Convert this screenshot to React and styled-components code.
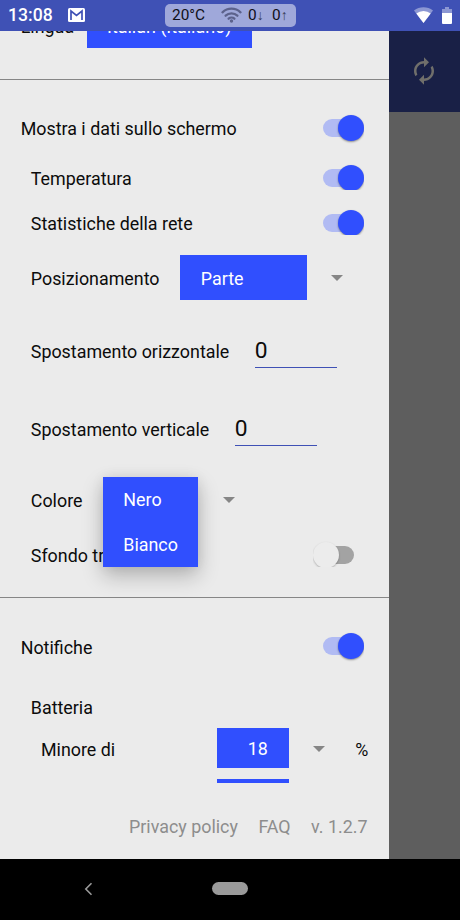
import React, { useState } from "react";
import styled, { createGlobalStyle, css } from "styled-components";
import { MdAutorenew } from "react-icons/md";

const colors = {
  indigo: "#3f51b5",
  indigoDim: "#192046",
  accent: "#304ffe",
  track: "#b1bbf3",
  trackOff: "#a3a3a3",
  surface: "#ebebeb",
  scrim: "#5e5e5e",
  text: "#0c0c0c",
  muted: "#8d8d8d",
  divider: "#868686"
};

const GlobalStyle = createGlobalStyle`
  * {
    box-sizing: border-box;
  }
  body {
    margin: 0;
    background: #000;
    color: ${colors.text};
    font-family: Roboto, "Liberation Sans", sans-serif;
    font-size: 17.88px;
    line-height: 21px;
  }
`;

const StyledScreen = styled.div`
  width: 460px;
  height: 920px;
  display: flex;
  flex-direction: column;
  overflow: hidden;
`;

const StyledStatusBar = styled.header`
  height: 30.5px;
  flex-shrink: 0;
  display: flex;
  align-items: center;
  padding: 0 8px;
  background: ${colors.indigo};
  color: #fff;
`;
const StyledClock = styled.span`
  width: 60px;
  padding-top: 1px;
  font-size: 17.6px;
  font-weight: 500;
`;
const StyledChip = styled.div`
  width: 131px;
  height: 23px;
  margin-left: 79.5px;
  padding-left: 7.5px;
  display: flex;
  align-items: center;
  border-radius: 5px;
  background: #9fa8da;
  color: #101018;
  font-size: 15.4px;
  white-space: nowrap;

  svg {
    margin: 0 6px 0 16px;
    flex-shrink: 0;
  }
`;
const StyledTemperature = styled.span`
  padding-top: 1px;
`;
const StyledTraffic = styled.span`
  display: flex;
  align-items: center;
  width: 24px;
  flex-shrink: 0;

  small {
    font-family: "Liberation Sans", sans-serif;
    font-size: 14px;
    color: #3a3d55;
    margin-top: 1px;
  }
`;
const StyledSystemIcons = styled.div`
  margin-left: auto;
  display: flex;
  gap: 9px;
`;

const StyledBody = styled.div`
  height: 828px;
  display: flex;
`;
const StyledDrawer = styled.main`
  width: 388.5px;
  height: 100%;
  overflow: hidden;
  background: ${colors.surface};
`;
const StyledBackdrop = styled.aside`
  flex: 1;
  background: ${colors.scrim};
`;
const StyledToolbar = styled.div`
  height: 81.5px;
  display: flex;
  align-items: center;
  justify-content: center;
  background: ${colors.indigoDim};
  color: #706f6b;
`;

const StyledRow = styled.div`
  height: 45px;
  margin-top: ${props => props.$top || 0}px;
  padding: 0 24.5px 0 ${props => props.$indent || 30.8}px;
  display: flex;
  align-items: center;
  white-space: nowrap;
`;
const StyledLabel = styled.span`
  padding-top: 1px;
`;
const StyledUnit = styled(StyledLabel)`
  margin-left: 30px;
`;
const StyledDivider = styled.hr`
  height: 1px;
  margin: ${props => props.$top}px 0 0;
  border: none;
  background: ${colors.divider};
`;
const StyledSelect = styled.div`
  width: ${props => props.$width}px;
  height: ${props => props.$height || 45}px;
  margin-left: ${props => props.$gap || 0}px;
  padding: 1px 0 0 ${props => props.$inset || 20.5}px;
  flex-shrink: 0;
  display: flex;
  align-items: center;
  background: ${colors.accent};
  color: #fff;
`;
const StyledCaret = styled.span`
  margin-left: 24.5px;
  border: 6px solid transparent;
  border-top-color: #868686;
  border-bottom: none;
`;
const StyledInput = styled.input`
  width: 82px;
  height: 35px;
  margin: 0 0 2px ${props => props.$gap}px;
  padding: 0;
  border: none;
  border-bottom: 1px solid ${colors.indigo};
  outline: none;
  background: none;
  color: ${colors.text};
  font: 22.8px Roboto, sans-serif;
`;

const StyledSwitch = styled.button`
  width: 41px;
  height: ${props => (props.$clipped ? 26 : 32)}px;
  margin: ${props => (props.$clipped ? "-3px" : "3px")} ${props =>
  props.$on ? 0 : 10.5}px 0 auto;
  padding: 1px 0 0;
  border: none;
  background: none;
  flex-shrink: 0;
  display: flex;
  overflow: hidden;
`;
const StyledTrack = styled.span`
  width: 41px;
  height: 18px;
  margin-top: 4px;
  display: flex;
  align-items: center;
  border-radius: 9px;
  background: linear-gradient(
    to right,
    ${props =>
      props.$on
        ? css`${colors.track}, ${colors.track}`
        : css`transparent 14px, ${colors.trackOff} 14px`}
  );
`;
const StyledThumb = styled.span`
  width: 26px;
  height: 26px;
  flex-shrink: 0;
  margin-left: ${props => (props.$on ? 15 : 0)}px;
  border-radius: 50%;
  background: ${props => (props.$on ? colors.accent : "#ececec")};
  box-shadow: 0 1px 2px rgba(0, 0, 0, ${props => (props.$on ? 0.4 : 0.25)});
`;

const StyledMenuAnchor = styled.div`
  position: relative;
  width: 95.5px;
  height: 45px;
  margin-left: 20.3px;
`;
const StyledMenu = styled.ul`
  position: absolute;
  top: 0;
  left: 0;
  z-index: 2;
  width: 100%;
  margin: 0;
  padding: 0;
  list-style: none;
  background: ${colors.accent};
  color: #fff;
  box-shadow: 0 9px 20px rgba(0, 0, 0, 0.24), 0 0 12px rgba(0, 0, 0, 0.07);
`;
const StyledMenuItem = styled.li`
  height: 44.75px;
  padding: 1px 0 0 20.5px;
  display: flex;
  align-items: center;
`;

const StyledNumberPicker = styled.div`
  height: 54.5px;
  width: 71.5px;
  margin: 14px 0 0 102px;
  flex-shrink: 0;
  overflow: hidden;
  border-bottom: 4.5px solid ${colors.accent};
`;
const StyledFooter = styled.footer`
  margin-top: 45px;
  padding-right: 21px;
  display: flex;
  justify-content: flex-end;
  gap: 20.5px;
  color: ${colors.muted};
`;

const StyledNavBar = styled.nav`
  flex: 1;
  display: flex;
  align-items: center;
  padding: 0 0 1px 83px;
  background: #000;
`;
const StyledHomePill = styled.span`
  width: 36px;
  height: 13px;
  margin-left: 119px;
  border-radius: 7px;
  background: #9a9a9a;
`;

const Switch = ({ defaultOn = true, clipped }) => {
  const [on, setOn] = useState(defaultOn);
  return (
    <StyledSwitch $on={on} $clipped={clipped} onClick={() => setOn(!on)}>
      <StyledTrack $on={on}>
        <StyledThumb $on={on} />
      </StyledTrack>
    </StyledSwitch>
  );
};

const MailIcon = () => (
  <svg width="17" height="14" viewBox="0 0 17 14">
    <rect width="17" height="14" rx="1.5" fill="#fff" />
    <path
      d="M3 12V3l5.5 4.5L14 3v9"
      fill="none"
      stroke={colors.indigo}
      strokeWidth="1.7"
    />
  </svg>
);
const WifiIcon = () => (
  <svg width="21" height="16" viewBox="0 0 21 16">
    <g fill="none" stroke="#5c628c" strokeWidth="2.3" strokeLinecap="round">
      <path d="M1.5 5.300a13 13 0 0 1 18 0" />
      <path d="M4.600 8.700a8.500 8.500 0 0 1 11.800 0" />
      <path d="M7.600 11.700a4.300 4.300 0 0 1 5.800 0" />
    </g>
    <circle cx="10.5" cy="14" r="1.7" fill="#5c628c" />
  </svg>
);
const SignalIcon = () => (
  <svg width="19" height="16" viewBox="0 0 19 16">
    <path d="M9.5 16L0 3.500a15.500 15.500 0 0 1 19 0z" fill="#8c97d3" />
    <path d="M9.500 16L2.300 6.500a11.500 11.500 0 0 1 14.400 0z" fill="#fff" />
  </svg>
);
const BatteryIcon = () => (
  <svg width="10" height="17" viewBox="0 0 10 17">
    <path d="M3 0h4v2h3v4H0V2h3z" fill="#8c97d3" />
    <path d="M0 6h10v10a1 1 0 0 1-1 1H1a1 1 0 0 1-1-1z" fill="#fff" />
  </svg>
);
const BackIcon = () => (
  <svg width="10" height="14" viewBox="0 0 10 14">
    <path
      d="M8.500 1.300L2.800 7l5.700 5.700"
      fill="none"
      stroke="#9a9a9a"
      strokeWidth="1.6"
    />
  </svg>
);

const StatusBar = () => (
  <StyledStatusBar>
    <StyledClock>13:08</StyledClock>
    <MailIcon />
    <StyledChip>
      <StyledTemperature>20°C</StyledTemperature>
      <WifiIcon />
      <StyledTraffic>
        0<small>↓</small>
      </StyledTraffic>
      <StyledTraffic>
        0<small>↑</small>
      </StyledTraffic>
    </StyledChip>
    <StyledSystemIcons>
      <SignalIcon />
      <BatteryIcon />
    </StyledSystemIcons>
  </StyledStatusBar>
);

const App = () => (
  <StyledScreen>
    <GlobalStyle />
    <StatusBar />
    <StyledBody>
      <StyledDrawer>
        <StyledRow $top={-27.5} $indent={20.7}>
          <StyledLabel>Lingua</StyledLabel>
          <StyledSelect $width={165} $gap={12.5}>
            Italian (Italiano)
          </StyledSelect>
        </StyledRow>
        <StyledDivider $top={31} />

        <StyledRow $top={26} $indent={20.7}>
          Mostra i dati sullo schermo
          <Switch />
        </StyledRow>
        <StyledRow $top={5}>
          Temperatura
          <Switch clipped />
        </StyledRow>
        <StyledRow>
          Statistiche della rete
          <Switch clipped />
        </StyledRow>
        <StyledRow $top={9}>
          <StyledLabel>Posizionamento</StyledLabel>
          <StyledSelect $width={126.5} $gap={20.8}>
            Parte
          </StyledSelect>
          <StyledCaret />
        </StyledRow>
        <StyledRow $top={29}>
          Spostamento orizzontale
          <StyledInput $gap={25.5} defaultValue="0" />
        </StyledRow>
        <StyledRow $top={33}>
          Spostamento verticale
          <StyledInput $gap={25.5} defaultValue="0" />
        </StyledRow>
        <StyledRow $top={25}>
          <StyledLabel>Colore</StyledLabel>
          <StyledMenuAnchor>
            <StyledMenu>
              <StyledMenuItem>Nero</StyledMenuItem>
              <StyledMenuItem>Bianco</StyledMenuItem>
            </StyledMenu>
          </StyledMenuAnchor>
          <StyledCaret />
        </StyledRow>
        <StyledRow $top={10.5}>
          Sfondo trasparente
          <Switch defaultOn={false} clipped />
        </StyledRow>
        <StyledDivider $top={19.5} />

        <StyledRow $top={26} $indent={20.7}>
          <StyledLabel>Notifiche</StyledLabel>
          <Switch />
        </StyledRow>
        <StyledRow $top={15}>
          <StyledLabel>Batteria</StyledLabel>
        </StyledRow>
        <StyledRow $top={-3} $indent={41}>
          <StyledLabel>Minore di</StyledLabel>
          <StyledNumberPicker>
            <StyledSelect $width={71.5} $height={40} $inset={30.5}>
              18
            </StyledSelect>
          </StyledNumberPicker>
          <StyledCaret />
          <StyledUnit>%</StyledUnit>
        </StyledRow>
        <StyledFooter>
          <span>Privacy policy</span>
          <span>FAQ</span>
          <span>v. 1.2.7</span>
        </StyledFooter>
      </StyledDrawer>
      <StyledBackdrop>
        <StyledToolbar>
          <MdAutorenew size={30} />
        </StyledToolbar>
      </StyledBackdrop>
    </StyledBody>
    <StyledNavBar>
      <BackIcon />
      <StyledHomePill />
    </StyledNavBar>
  </StyledScreen>
);

export default App;
